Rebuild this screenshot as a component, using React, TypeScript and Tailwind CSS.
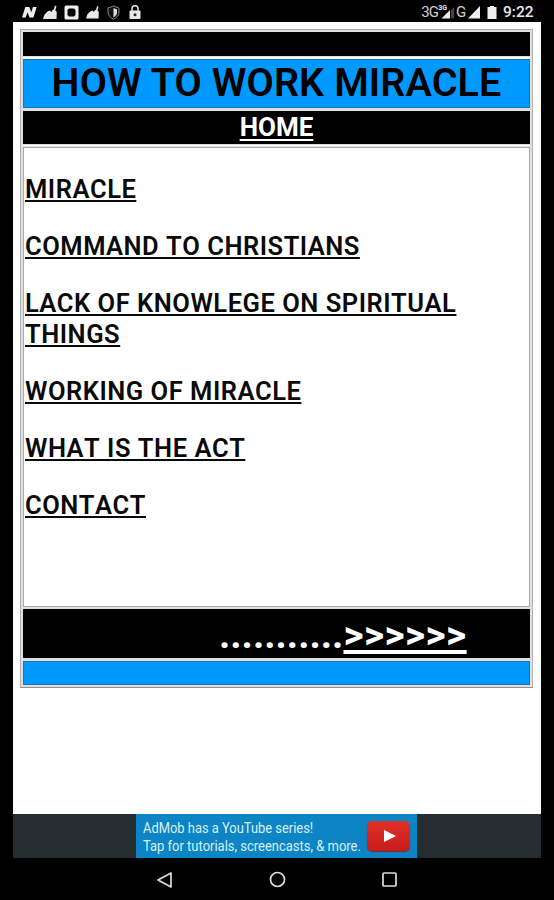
const links = [
  'MIRACLE',
  'COMMAND TO CHRISTIANS',
  'LACK OF KNOWLEGE ON SPIRITUAL THINGS',
  'WORKING OF MIRACLE',
  'WHAT IS THE ACT',
  'CONTACT',
];

function CleanerIcon() {
  return (
    <svg width="14" height="14" viewBox="0 0 14 14" fill="#e8e8e8">
      <path d="M0 14 1.5 9.5 4.5 6.5 7 5.5 8.5 7 9.5 5 10.8 4.5 12 0.5 13.5 1.2 12.3 5.3 13.8 7 13.5 14Z" />
    </svg>
  );
}

function StatusBar() {
  return (
    <header className="flex h-[22px] items-start justify-between bg-black pl-[21px] pr-[20px] text-[#e8e8e8]">
      <div className="flex h-[24px] items-center">
        <svg width="17" height="14" viewBox="0 0 17 14" fill="#eeeeee">
          <path d="M1 12.5 4.3 2h4l2 5.2L12 2h3.7l-3.3 10.5H8.6L6.4 7.2 4.8 12.5Z" />
        </svg>
        <span className="ml-[5px]"><CleanerIcon /></span>
        <svg className="ml-[7px]" width="15" height="15" viewBox="0 0 15 15">
          <rect x="0.5" y="0.5" width="14" height="14" rx="1.5" fill="#eeeeee" />
          <path d="M5 3.5h5l1.5 1.5v5L10 11.5H5L3.5 10V5Z" fill="#000" />
        </svg>
        <span className="ml-[7px] flex w-[13px]"><CleanerIcon /></span>
        <svg className="ml-[8px]" width="13" height="15" viewBox="0 0 13 15">
          <path d="M6.5 1 12 3v4c0 3.5-2.2 5.8-5.5 7.2C3.2 12.8 1 10.5 1 7V3Z" fill="#111" stroke="#888" />
          <path d="M6.5 3 10 4.5v3c0 2.2-1.4 3.8-3.5 4.8Z" fill="#ddd" />
        </svg>
        <svg className="ml-[9px]" width="12" height="15" viewBox="0 0 12 15">
          <path d="M3 6V3.8a3 3 0 0 1 6 0V6" fill="none" stroke="#e8e8e8" strokeWidth="1.5" />
          <rect x="0.5" y="5.5" width="11" height="8.5" rx="1" fill="#e8e8e8" />
          <circle cx="6" cy="9.7" r="1.5" fill="#222" />
        </svg>
      </div>
      <div className="flex h-[24px] items-center">
        <span className="text-[15px] tracking-[-0.8px] text-[#d0d0d0]">3G</span>
        <span className="mb-[8px] text-[7px] font-bold leading-none">3G</span>
        <svg className="ml-[-8px] mt-[1px]" width="17" height="12" viewBox="0 0 17 12">
          <path d="M11 3v8.5H2.5Z" fill="#eee" />
          <path d="M12 3 15 0v11.5h-3Z" fill="#444" />
        </svg>
        <span className="w-[11px] text-[15px] text-[#d0d0d0]">G</span>
        <svg className="ml-[1px]" width="12" height="13" viewBox="0 0 12 13" fill="#eee">
          <path d="M12 0v12.5H0Z" />
        </svg>
        <svg className="ml-[7px]" width="10" height="13" viewBox="0 0 10 13" fill="#eee">
          <path d="M0.5 1H3V0h4v1h2.5v12h-9Z" />
        </svg>
        <span className="ml-[6px] mt-[2px] w-[31px] whitespace-nowrap text-[15.5px] font-medium">9:22</span>
      </div>
    </header>
  );
}

function AdBanner() {
  return (
    <div className="flex h-[44px] justify-center bg-[#262d31]">
      <div className="ml-[-1px] flex h-[44px] w-[281px] bg-[#0d84c4] pl-[7px] pt-[6px] text-[14.5px] leading-[18px] text-[#d9f1fb]">
        <div className="w-[224px] shrink-0 whitespace-nowrap">
          <p className="w-max origin-left scale-x-[0.89]">AdMob has a YouTube series!</p>
          <p className="w-max origin-left scale-x-[0.895]">Tap for tutorials, screencasts, &amp; more.</p>
        </div>
        <div className="mt-[1px] flex h-[30px] w-[43px] items-center justify-center rounded-[5px] bg-linear-to-b from-[#e03028] to-[#c81c1c] shadow-[0_1px_1px_#7c2a3a]">
          <svg className="ml-[2px]" width="12" height="12" viewBox="0 0 12 12" fill="white">
            <path d="M0 0 12 6 0 12Z" />
          </svg>
        </div>
      </div>
    </div>
  );
}

function NavBar() {
  return (
    <nav className="flex h-[42px] items-center pl-[156px] pt-[1px]">
      <svg width="17" height="18" viewBox="0 0 17 18" fill="none" stroke="#ddd" strokeWidth="1.7" strokeLinejoin="round">
        <path d="M15 2v14L2 9Z" />
      </svg>
      <svg className="ml-[96px]" width="17" height="17" viewBox="0 0 17 17" fill="none" stroke="#ddd" strokeWidth="1.7">
        <circle cx="8.5" cy="8.5" r="7" />
      </svg>
      <svg className="ml-[95px]" width="17" height="17" viewBox="0 0 17 17" fill="none" stroke="#ddd" strokeWidth="1.7">
        <rect x="2" y="2" width="13" height="13" rx="1" />
      </svg>
    </nav>
  );
}

export default function App() {
  return (
    <div className="flex h-[900px] w-[554px] flex-col overflow-hidden bg-black font-[Roboto,sans-serif]">
      <StatusBar />
      <main className="ml-[13px] flex h-[792px] w-[528px] flex-col bg-white pl-[7px] pt-[7px]">
        <div className="flex h-[659px] w-[513px] flex-col border border-t-[#aaaaaa] border-l-[#b0b0b0] border-r-[#b0b0b0] border-b-[#909090] bg-[#e0e0e0] p-[2px]">
          <div className="h-[24px] bg-black" />
          <div className="mt-[1px] h-[2px] bg-white" />
          <div className="flex h-[49px] items-center justify-center border border-[#1376b8] bg-[#0099ff] pb-[1px]">
            <h1 className="whitespace-nowrap text-[39.5px] font-semibold leading-none tracking-[0.1px] text-black">HOW TO WORK MIRACLE</h1>
          </div>
          <div className="mt-[3px] flex h-[33px] justify-center bg-black">
            <a className="text-[26px] font-bold leading-[33px] text-white underline decoration-[2px] underline-offset-[3px]">HOME</a>
          </div>
          <div className="mt-[1px] h-[1px] bg-white" />
          <ul className="mt-[1px] flex h-[460px] flex-col gap-[26px] border border-[#aaaaaa] bg-white pl-[1px] pt-[26px]">
            {links.map((label) => (
              <li key={label} className="w-[480px] text-[25.5px] font-semibold leading-[31px] tracking-[0.52px] text-[#0a0a0a] [font-kerning:none]">
                <a className="underline decoration-[2px] underline-offset-[2px] [text-decoration-skip-ink:none]">{label}</a>
              </li>
            ))}
          </ul>
          <p className="mt-[2px] h-[49px] whitespace-nowrap bg-black pl-[196px] text-[39px] font-bold leading-[52px] text-white">
            ...........<a className="tracking-[0.4px] underline decoration-[4px] underline-offset-[2px]">&gt;&gt;&gt;&gt;&gt;&gt;</a>
          </p>
          <div className="mt-[3px] h-[24px] border border-[#1376b8] bg-[#0099ff]" />
        </div>
      </main>
      <div className="ml-[13px] w-[528px]">
        <AdBanner />
      </div>
      <NavBar />
    </div>
  );
}
